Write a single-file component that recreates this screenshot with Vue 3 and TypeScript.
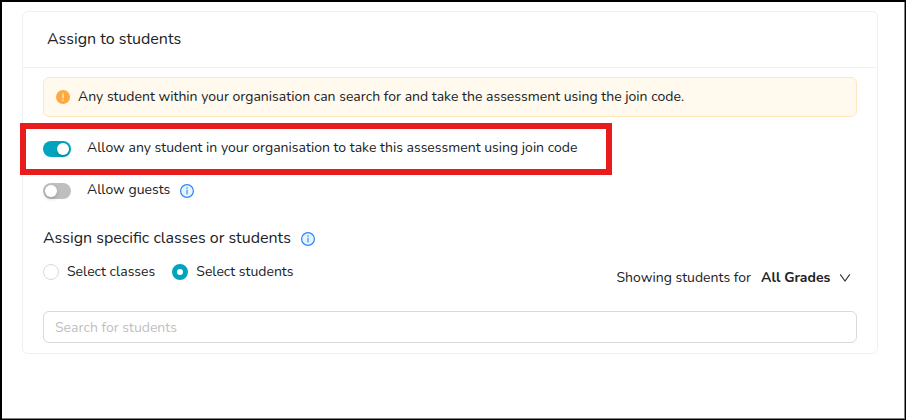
<script setup lang="ts">
import { ref } from 'vue'

type Mode = 'classes' | 'students'

const allowOrganisation = ref<boolean>(true)
const allowGuests = ref<boolean>(false)
const mode = ref<Mode>('students')
const grade = ref<string>('all')
const search = ref<string>('')

const modes: { value: Mode; label: string }[] = [
  { value: 'classes', label: 'Select classes' },
  { value: 'students', label: 'Select students' },
]
</script>

<template>
  <main class="frame">
    <section class="card">
      <header class="card-header">
        <h1 class="title">Assign to students</h1>
      </header>

      <div class="card-body">
        <div class="alert" role="status">
          <svg class="icon" viewBox="0 0 14 14" aria-hidden="true">
            <circle cx="7" cy="7" r="7" fill="#ffa940" />
            <rect x="6.4" y="3.2" width="1.3" height="5" rx="0.5" fill="#fff3dc" />
            <circle cx="7" cy="10.2" r="0.8" fill="#fff3dc" />
          </svg>
          <span>Any student within your organisation can search for and take the assessment using the join code.</span>
        </div>

        <div class="switch-row highlighted">
          <input id="allow-organisation" v-model="allowOrganisation" class="switch" type="checkbox" role="switch" />
          <label for="allow-organisation">Allow any student in your organisation to take this assessment using join code</label>
        </div>

        <div class="switch-row">
          <input id="allow-guests" v-model="allowGuests" class="switch" type="checkbox" role="switch" />
          <label for="allow-guests">Allow guests</label>
          <svg class="icon info" viewBox="0 0 14 14" aria-hidden="true">
            <circle cx="7" cy="7" r="6.4" fill="#e6f4ff" stroke="#2f86f6" stroke-width="1.2" />
            <rect x="6.5" y="5.8" width="1.1" height="4.6" fill="#2f86f6" />
            <circle cx="7" cy="4" r="0.8" fill="#2f86f6" />
          </svg>
        </div>

        <div class="subheading">
          <h2 class="title">Assign specific classes or students</h2>
          <svg class="icon info" viewBox="0 0 14 14" aria-hidden="true">
            <circle cx="7" cy="7" r="6.4" fill="#e6f4ff" stroke="#2f86f6" stroke-width="1.2" />
            <rect x="6.5" y="5.8" width="1.1" height="4.6" fill="#2f86f6" />
            <circle cx="7" cy="4" r="0.8" fill="#2f86f6" />
          </svg>
        </div>

        <div class="options">
          <div class="radios" role="radiogroup">
            <label v-for="item in modes" :key="item.value" class="radio-label">
              <input v-model="mode" class="radio" type="radio" name="mode" :value="item.value" />
              <span>{{ item.label }}</span>
            </label>
          </div>
          <div class="grades">
            <label for="grade">Showing students for</label>
            <div class="select-wrap">
              <select id="grade" v-model="grade" class="select">
                <option value="all">All Grades</option>
              </select>
              <svg class="chevron" viewBox="0 0 12 12" aria-hidden="true">
                <path d="M1.2 2.4 L6 9 L10.8 2.4" fill="none" stroke="#333" stroke-width="1.1" />
              </svg>
            </div>
          </div>
        </div>

        <input v-model="search" class="search" type="text" placeholder="Search for students" aria-label="Search for students" />
      </div>
    </section>
  </main>
</template>

<style>
body {
  margin: 0;
}
</style>

<style scoped>
.frame {
  box-sizing: border-box;
  min-height: 100vh;
  padding: 9px 27px 20px 20px;
  border: solid #000;
  border-width: 2px 1px 1px 2px;
  box-shadow: inset -1px -1px 0 #808080;
  background: #fff;
  color: #202124;
  font-family: Nunito, "Noto Sans", sans-serif;
  font-size: 14px;
  line-height: 22px;
}

.card {
  border: 1px solid #f0f0f0;
  border-radius: 6px;
}

.card-header {
  padding: 15px 24px 16px;
  border-bottom: 1px solid #f0f0f0;
}

.title {
  margin: 0;
  font-size: 16px;
  font-weight: 400;
  line-height: 24px;
}

.card-body {
  padding: 9px 20px 10px;
}

.alert {
  display: flex;
  align-items: center;
  gap: 8px;
  padding: 8px 12px;
  border: 1px solid #ffe7c2;
  border-radius: 6px;
  background: #fff9ee;
}

.icon {
  flex: none;
  width: 14px;
  height: 14px;
}

.switch-row {
  position: relative;
  display: flex;
  align-items: center;
  margin-top: 20px;
}

.switch-row label {
  margin-left: 16px;
}

.highlighted::before {
  position: absolute;
  inset: -14px auto -16px -23px;
  box-sizing: border-box;
  width: 592px;
  border: 6px solid #e81c1c;
  pointer-events: none;
  content: "";
}

.info {
  margin-top: 2px;
  margin-left: 10px;
}

.switch {
  display: flex;
  flex: none;
  box-sizing: border-box;
  width: 28px;
  height: 16px;
  margin: 2px 0 0;
  padding: 2px;
  border-radius: 8px;
  background: #bfbfbf;
  appearance: none;
}

.switch::before {
  width: 12px;
  height: 12px;
  border-radius: 50%;
  background: #fff;
  box-shadow: 0 2px 4px rgba(0, 35, 11, 0.2);
  content: "";
}

.switch:checked {
  justify-content: flex-end;
  background: #00a5bd;
}

.subheading {
  display: flex;
  align-items: center;
  margin-top: 25px;
}

.options {
  display: flex;
  align-items: flex-start;
  justify-content: space-between;
  margin: 11px 0 22px;
}

.radios {
  display: flex;
  gap: 17px;
}

.radio-label {
  display: flex;
  align-items: center;
  gap: 8px;
}

.radio {
  box-sizing: border-box;
  width: 16px;
  height: 16px;
  margin: 0;
  border: 1px solid #d9d9d9;
  border-radius: 50%;
  background: #fff;
  appearance: none;
}

.radio:checked {
  border: 5px solid #00a5bd;
}

.grades {
  display: flex;
  gap: 10px;
  padding: 6px 6px 0 0;
}

.select-wrap {
  display: flex;
  align-items: center;
}

.select {
  margin-right: -12px;
  padding: 0 20px 0 0;
  border: 0;
  background: transparent;
  color: inherit;
  font: inherit;
  font-weight: 700;
  appearance: none;
}

.chevron {
  width: 12px;
  height: 12px;
  pointer-events: none;
}

.search {
  display: block;
  box-sizing: border-box;
  width: 100%;
  height: 32px;
  padding: 4px 11px;
  border: 1px solid #d9d9d9;
  border-radius: 6px;
  background: #fff;
  color: inherit;
  font: inherit;
}

.search::placeholder {
  color: #bfbfbf;
}
</style>
